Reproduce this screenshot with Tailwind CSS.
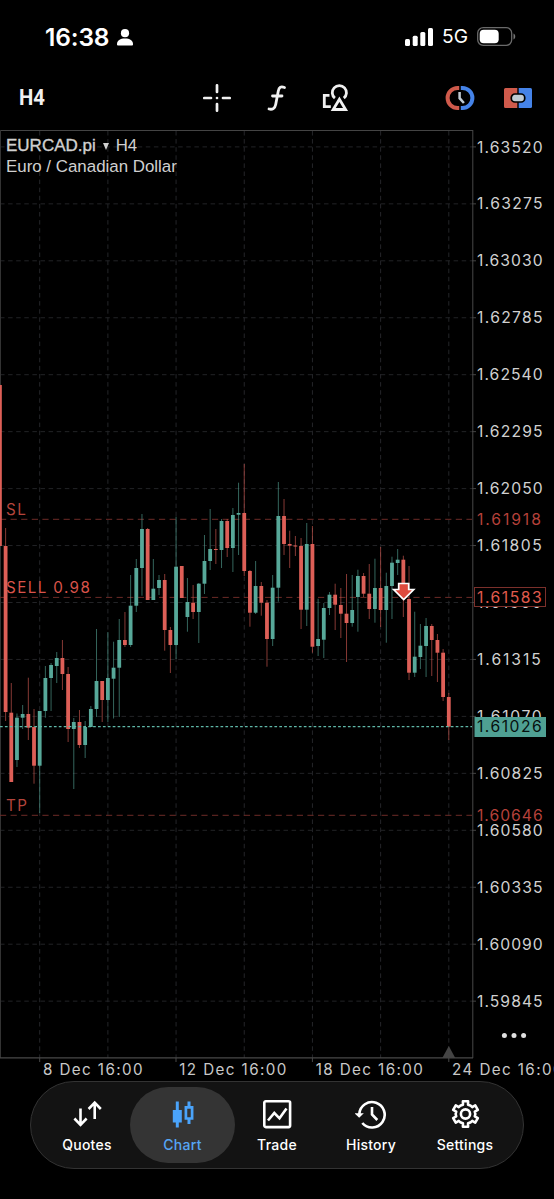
<!DOCTYPE html>
<html lang="en">
<head>
    <meta charset="UTF-8">
    <meta name="viewport" content="width=device-width, initial-scale=1.0">
    <title>EURCAD.pi H4</title>
    <script src="https://cdn.jsdelivr.net/npm/@tailwindcss/browser@4"></script>
</head>
<body class="w-[554px] h-[1199px] overflow-hidden bg-black text-white font-['Inter',sans-serif]">
    <div class="relative flex flex-col h-full">
        <!-- status bar -->
        <header class="flex items-center justify-between h-[66px] pl-[45px] pr-[38px] pt-[8px]">
            <div class="flex items-center gap-[8px]">
                <span class="text-[24.5px] leading-none font-semibold tracking-[-0.15px]">16:38</span>
                <svg class="w-4 h-[17px]" viewBox="0 0 16 17" fill="#fff"><circle cx="8" cy="4.2" r="4.1"/><path d="M0 15.2C0 11.5 3.2 9.6 8 9.6s8 1.9 8 5.6c0 1-.5 1.4-1.4 1.4H1.4C.5 16.6 0 16.2 0 15.2z"/></svg>
            </div>
            <div class="flex items-center">
                <svg class="w-7 h-[18px] mr-[9px]" viewBox="0 0 28 18" fill="#fff"><rect x="0" y="11" width="5" height="7" rx="1.5"/><rect x="7.7" y="7.7" width="5" height="10.3" rx="1.5"/><rect x="15.3" y="4" width="5" height="14" rx="1.5"/><rect x="23" y="0" width="5" height="18" rx="1.5"/></svg>
                <span class="text-[19.2px] leading-none mr-[9px]">5G</span>
                <svg class="w-[39px] h-[19px]" viewBox="0 0 39 19"><rect x=".7" y=".7" width="34" height="17.6" rx="5.5" fill="none" stroke="#6a6a6a" stroke-width="1.3"/><rect x="2.7" y="2.7" width="19" height="13.6" rx="4" fill="#fff"/><path d="M36.5 6.5c2.3 1 2.3 5 0 6z" fill="#777"/></svg>
            </div>
        </header>

        <!-- chart toolbar -->
        <nav class="flex items-center h-[64px] pl-[19px] pr-[21px]">
            <span class="w-[184px]"><span class="inline-block origin-left scale-x-[0.9] text-[22.5px] leading-none font-bold font-['Roboto',sans-serif] text-[#f0f0f0]">H4</span></span>
            <svg class="w-[28px] h-[28px]" viewBox="0 0 28 28" stroke="#f0f0f0" stroke-width="2.7" stroke-linecap="round"><path d="M14 1.3v6.7M14 20v6.7M1.3 14H8M20 14h6.7M14 14v0"/></svg>
            <svg class="w-[20px] h-[28px] ml-[36px]" viewBox="0 0 20 28" fill="none" stroke="#f0f0f0" stroke-width="2.8" stroke-linecap="round"><path d="M17.5 3.5c-3.600-1.3-5.500-.3-6.200 3.400L8.700 20.500c-.8 4-3.300 5.400-6.700 4.500M5.500 12h9.500"/></svg>
            <svg class="w-[28px] h-[28px] ml-[35px] mr-px" viewBox="0 0 28 28" fill="none" stroke="#f0f0f0" stroke-width="2.8"><path d="M7.500 11.300H2.300v11.400h6.500M12.900 14.200A7.100 7.100 0 1 1 21.800 14.200"/><path d="M17.400 15.200L11.200 25.500h12.400z"/></svg>
            <svg class="w-[30px] h-[24px] ml-auto" viewBox="0 0 30 24" fill="none"><path d="M14.2 2H12.600A10 10 0 0 0 12.600 22h1.600" stroke="#cf5a4b" stroke-width="4"/><path d="M15.800 2h1.600a10 10 0 0 1 0 20h-1.600" stroke="#4583e8" stroke-width="4"/><path d="M14.600 6v6.200l4.300 4.800" stroke="#c0cbd3" stroke-width="2.5"/></svg>
            <svg class="w-[30px] h-[22px] ml-[28px]" viewBox="0 0 30 22"><path d="M2.500 1H14.300v20H2.500A1.500 1.500 0 0 1 1 19.500v-17A1.500 1.500 0 0 1 2.500 1z" fill="#cf5a4b"/><path d="M15.700 1h11.800A1.500 1.500 0 0 1 29 2.500v17a1.500 1.500 0 0 1-1.500 1.500H15.700z" fill="#4583e8"/><rect x="8.3" y="7" width="13.4" height="8" rx="3.6" fill="#c0cbd3" stroke="#000" stroke-width="1.7"/></svg>
        </nav>

        <!-- chart -->
        <main class="relative h-[950px]">
            <svg id="chart" class="block w-[554px] h-[950px]" viewBox="0 130 554 950"></svg>
            <div class="absolute left-[6px] top-[5px] font-['Liberation_Sans',sans-serif] text-[#d0d0d0] leading-[21px]">
                <div class="flex items-center text-[16.8px]"><b class="font-medium text-[17px] [-webkit-text-stroke:0.35px]">EURCAD.pi</b><svg class="w-[6px] h-[8px] mx-[7px]" viewBox="0 0 6 8" fill="#d0d0d0"><path d="M0 1h6L3 8z"/></svg><span>H4</span></div>
                <div class="text-[16.9px]">Euro / Canadian Dollar</div>
            </div>
        </main>

        <!-- tab bar -->
        <footer class="flex items-center h-[88px] w-[494px] ml-[30px] mt-[1px] px-[6px] rounded-full bg-[#131313] border border-[#333] text-[14px] font-medium tracking-[0.25px]">
            <a class="flex flex-col items-center w-[100px] gap-[6px] pt-[2px] leading-[18px]">
                <svg class="w-8 h-8" viewBox="0 0 32 32" fill="none" stroke="#fff" stroke-width="2.6"><path d="M9.500 10.500v16.500M3.400 20.500l6.100 6.300 6.100-6.300M23.700 21V4.500M17.600 11l6.100-6.300 6.100 6.300"/></svg>
                Quotes
            </a>
            <a class="flex flex-col items-center justify-center w-[105px] h-[76px] -ml-[7px] -mr-[5px] gap-[6px] pt-[2px] leading-[18px] rounded-full bg-[#343434] text-[#56a5f5]">
                <svg class="w-8 h-8" viewBox="0 0 32 32" fill="#4aa3fa"><path d="M8.800 3.500h3v26h-3z"/><path d="M5.800 12h9v12.500h-9zM20.500 3.500h3v6h-3zM20.500 20h3v6h-3z"/><path d="M18.900 9.300h6.200v11.200h-6.200z" fill="none" stroke="#4aa3fa" stroke-width="2.7"/></svg>
                Chart
            </a>
            <a class="flex flex-col items-center w-[94px] gap-[6px] pt-[2px] leading-[18px]">
                <svg class="w-8 h-8" viewBox="0 0 32 32" fill="none" stroke="#fff" stroke-width="2.6"><rect x="3.3" y="3.3" width="25.8" height="25.8" rx="1.5"/><path d="M7 22.500l6.300-7.500 5.200 5.300L25.500 10.500"/></svg>
                Trade
            </a>
            <a class="flex flex-col items-center w-[94px] gap-[6px] pt-[2px] leading-[18px]">
                <svg class="w-8 h-8" viewBox="0 0 32 32" fill="none" stroke="#fff" stroke-width="2.6"><path d="M4.300 16A12.700 12.700 0 1 1 7.300 25"/><path d="M17 9v7.500l5.300 5.500"/><path d="M-.5 15.300h9.300l-4.600 4.500z" fill="#fff" stroke="none"/></svg>
                History
            </a>
            <a class="flex flex-col items-center w-[94px] gap-[6px] pt-[2px] leading-[18px]">
                <svg id="gear" class="w-8 h-8" viewBox="-16.5 -16 32 32" fill="none" stroke="#fff" stroke-width="2.6" stroke-linejoin="round"><circle r="4.6"/></svg>
                Settings
            </a>
        </footer>
    </div>

    <script>
        const RED = "#dd5f57", GREEN = "#57a899";
        const STEP = 5.682;

        // [direction, body top, body bottom, wick top, wick bottom]
        const candles = [
            ["d",385,546,385,546],["d",546,712,528,721],["d",712.7,782,683,782],["u",717.7,760,713.5,767],
            ["u",714,717.7,705,729],["d",714,727.7,677.7,740],["d",727,765.7,709,783.7],["u",711,765.7,711,813],
            ["u",678,711,666,717.7],["u",665,678,663,711],["u",658,666,652,683],["d",658,674,640,690],
            ["d",674,729,667,742],["u",722,729,718,789],["d",722,745,710,748],["u",727,745,721,758],
            ["u",709,727,706,727],["u",681,709,629,717],["d",681,700,681,722],["u",678,700,632,722],
            ["u",667.7,678.7,641.7,718.5],["u",640,667.7,619,717],["d",640,645,612,647],["u",605.7,645,575,647],
            ["u",568,605.7,559,612],["u",529,568,514,595.7],["d",529,600,528,600],["u",588.7,600,559,600],
            ["u",580,588,575,595],["d",580,630,574,650.7],["d",630,645,627,673],["u",566.7,645,516.7,659],
            ["d",566,598,566,598],["u",602,617,578,631.7],["d",602.7,612,585,619],["u",583.7,612,583,643],
            ["u",561,583.7,535,594],["u",549,561,509,570],["d",549,550,529,564],["u",521,550,519,568],
            ["d",521,548,519,557],["u",515,548,508,572],["u",513,514.7,482.7,555],["d",513,571,464,576],
            ["d",571,612.7,570,626.7],["u",586,612.7,561,614],["d",586,602.7,582,615.7],["d",602.7,639,600,666.7],
            ["u",587.7,639,575,646],["u",516,587.7,482,601.7],["d",516,544,499,555],["d",544,545.7,530.7,568],
            ["d",545.5,546.5,536,556],["d",546,609.7,538,629],["u",544,609.7,523,626],["d",544,646.7,526,652.7],
            ["u",639,646,598.7,656],["u",608,639.7,603,658],["u",594.7,608,592,615],["d",594.7,604.7,583.7,630],
            ["d",605,613.7,588,638],["d",613.7,623,574,662],["u",610,623,575,626.7],["u",576,597,569.7,631.7],
            ["d",576,593.7,573,597],["d",593.7,609,564,619],["u",588,609,558.7,622.7],["d",588,610,547,627],
            ["u",586,610,572.7,642.7],["u",562.7,586,556.7,619],["u",559.7,563,549,575],["d",559.7,599,555.7,617],
            ["d",599,672.7,566,680],["u",656.7,672.7,611.7,677],["u",645.7,657,624,669],["u",626,646,618,677],
            ["d",626,640,624,676],["d",640,652.7,634,682],["d",652.7,697,649,701],["d",697,726.7,693,740]
        ];
        const times = [[39.7, "8 Dec 16:00"], [176, "12 Dec 16:00"], [312.4, "18 Dec 16:00"], [448.8, "24 Dec 16:00"]];

        function line(x1, y1, x2, y2, color, dash, width) {
            return `<line x1="${x1}" y1="${y1}" x2="${x2}" y2="${y2}" stroke="${color}" stroke-width="${width || 1}" stroke-dasharray="${dash || "none"}"/>`;
        }
        function label(x, y, text, color, size) {
            return `<text x="${x}" y="${y}" fill="${color}" font-size="${size}" letter-spacing="1.4">${text}</text>`;
        }
        // prices keep nearly the same width however many ones they hold
        function price(y, text, color) {
            const width = 66.8 - 0.9 * (text.split("1").length - 2);
            return `<text x="477" y="${y}" fill="${color}" font-size="15.7" letter-spacing="1.15" textLength="${width}">${text}</text>`;
        }

        let out = "";
        // grid
        for (let i = 0; i < 16; i++) {
            const y = 146.9 + i * 56.95;
            out += line(0, y, 472, y, "#222326", "4.5 3.6");
            out += line(472, y, 476, y, "#444");
            out += price(y + 5.6, (1.6352 - i * 0.00245).toFixed(5), "#d0d0d0");
        }
        for (let i = 0; i < 7; i++) {
            const x = 39.7 + i * STEP * 12;
            out += line(x, 131, x, 1058, "#242529", "4.5 3.6");
        }
        // frame
        out += line(0, 130.5, 473, 130.5, "#444") + line(0.5, 130, 0.5, 1058, "#333") + line(472.8, 130, 472.8, 1058, "#484848") + line(0, 1057.8, 473, 1057.8, "#484848", "", 1.3);
        // order levels
        [519.3, 597.4, 815.3].forEach(y => out += line(0, y, 472, y, "#6d2b27", "6.2 4.4"));
        // candles
        candles.forEach(([dir, top, bottom, high, low], i) => {
            const x = i * STEP - 0.08;
            const color = dir === "u" ? GREEN : RED;
            out += `<rect x="${x - 0.5}" y="${high}" width="1" height="${low - high}" fill="${color}" opacity="0.6"/>`;
            out += `<rect x="${x - 1.9}" y="${top}" width="3.8" height="${bottom - top}" fill="${color}"/>`;
        });
        out += line(0, 726.6, 472, 726.6, "#5fb8a8", "2.7 2.2", 1.3);
        out += `<path d="M448.8 1046l6.5 12h-13z" fill="#444"/>`;
        times.forEach(([x, t]) => out += line(x, 1058, x, 1062, "#484848") + label(x + 3.3, 1075, t, "#c8c8c8", 15.2));
        // order labels
        out += label(6, 515, "SL", "#b4453c", 15.2) + label(6, 593, "SELL 0.98", "#d9534a", 15.2) + label(6, 810.5, "TP", "#b4453c", 15.2);
        out += price(524.8, "1.61918", "#b5413a") + price(820.8, "1.60646", "#b5413a");
        out += `<rect x="474.5" y="587.5" width="71" height="19" fill="#000" stroke="#7b302b"/>` + price(603, "1.61583", "#e05a4d");
        out += `<rect x="474.5" y="717" width="71.5" height="20" fill="#4fa093"/>` + price(732.3, "1.61026", "#06100e");
        // sell marker
        out += `<path d="M398.7 583.5h10v6h5l-10 10-10-10h5z" fill="#df4a3d" stroke="#fff" stroke-width="1.7"/>`;
        out += `<g fill="#e0e0e0"><circle cx="504.4" cy="1035.5" r="2.5"/><circle cx="514" cy="1035.5" r="2.5"/><circle cx="523.6" cy="1035.5" r="2.5"/></g>`;
        document.getElementById("chart").innerHTML = out;

        // gear outline with six teeth
        let gear = "";
        for (let i = 0; i < 6; i++) {
            const a = i * Math.PI / 3 - Math.PI / 2;
            [[-0.5, 9.8], [-0.27, 9.6], [-0.2, 13], [0.2, 13], [0.27, 9.6], [0.5, 9.8]].forEach(([d, r]) => {
                gear += (gear ? "L" : "M") + (r * Math.cos(a + d)).toFixed(2) + " " + (r * Math.sin(a + d)).toFixed(2);
            });
        }
        document.getElementById("gear").innerHTML += `<path d="${gear}Z"/>`;
    </script>
</body>
</html>
